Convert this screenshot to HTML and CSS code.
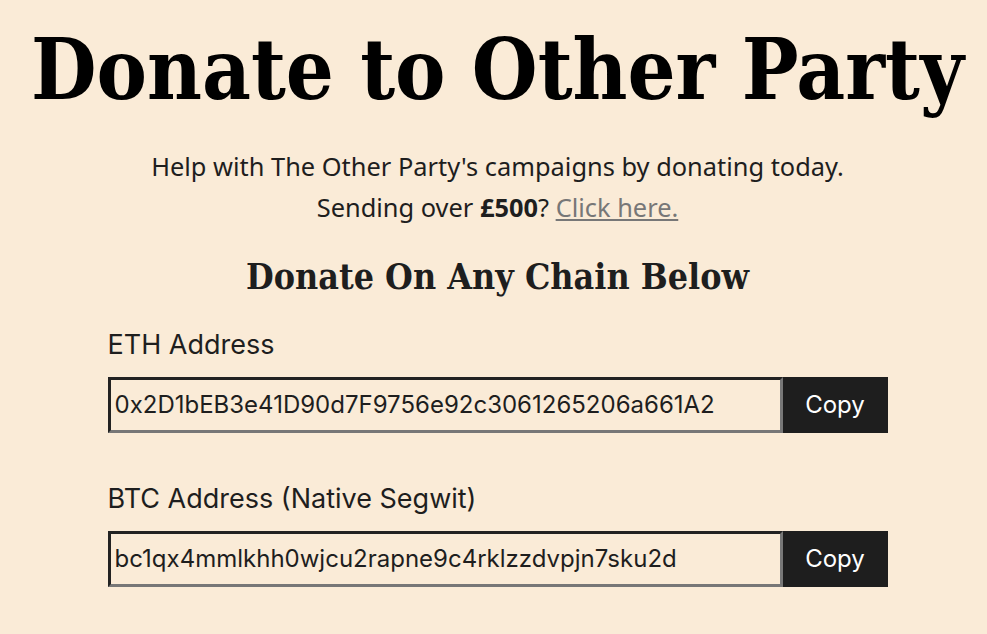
FILE: index.html
```html
<!DOCTYPE html>
<html lang="en">
<head>
    <meta charset="UTF-8">
    <meta name="viewport" content="width=device-width, initial-scale=1.0">
    <title>Donate to Other Party</title>
    <link rel="stylesheet" href="styles.css">
</head>
<body>
    <h1 class="title">Donate to Other Party</h1>
    <p class="intro">Help with The Other Party's campaigns by donating today.<br>
        Sending over <strong>£500</strong>? <a href="#">Click here.</a></p>
    <h2 class="subtitle">Donate On Any Chain Below</h2>
    <div class="chains">
        <div class="chain">
            <label for="eth">ETH Address</label>
            <div class="address-row">
                <input id="eth" type="text" value="0x2D1bEB3e41D90d7F9756e92c3061265206a661A2" readonly>
                <button class="copy-btn">Copy</button>
            </div>
        </div>
        <div class="chain">
            <label for="btc">BTC Address (Native Segwit)</label>
            <div class="address-row">
                <input id="btc" type="text" value="bc1qx4mmlkhh0wjcu2rapne9c4rklzzdvpjn7sku2d" readonly>
                <button class="copy-btn">Copy</button>
            </div>
        </div>
    </div>
</body>
</html>
```

FILE: styles.css
```css
body {
    background: #faebd7;
    color: #1e1e1e;
    margin: 0 0 0 8px;
    text-align: center;
    font-family: 'Noto Sans', sans-serif;
}
.title {
    font-family: 'DejaVu Serif Condensed', 'DejaVu Serif', serif;
    font-stretch: semi-condensed;
    font-size: 84px;
    color: #000;
    margin: 20px 0 0;
    line-height: 1.2;
    white-space: nowrap;
}
.intro {
    font-size: 25.4px;
    line-height: 41px;
    margin: 25px 0 0;
}
.intro a {
    color: #777;
}
.subtitle {
    font-family: 'DejaVu Serif Condensed', 'DejaVu Serif', serif;
    font-stretch: semi-condensed;
    font-size: 35.5px;
    margin: 28px 0 0;
}
.chains {
    width: 780px;
    margin: 0 auto;
    text-align: left;
    font-family: Inter, sans-serif;
}
.chain {
    margin-top: 31px;
}
.chain + .chain {
    margin-top: 49px;
}
label {
    display: block;
    font-size: 27px;
    margin-bottom: 16px;
}
.address-row {
    display: flex;
    height: 56px;
}
.address-row input {
    flex: 1;
    min-width: 0;
    box-sizing: border-box;
    height: 56px;
    border: 3px solid;
    border-color: #222 #777 #777 #222;
    background: transparent;
    font-family: Inter, sans-serif;
    font-size: 24px;
    color: #1e1e1e;
    padding: 0 4px;
}
.copy-btn {
    width: 105px;
    border: none;
    background: #1e1e1e;
    color: #fff;
    font-family: Inter, sans-serif;
    font-size: 24px;
    cursor: pointer;
}
```
